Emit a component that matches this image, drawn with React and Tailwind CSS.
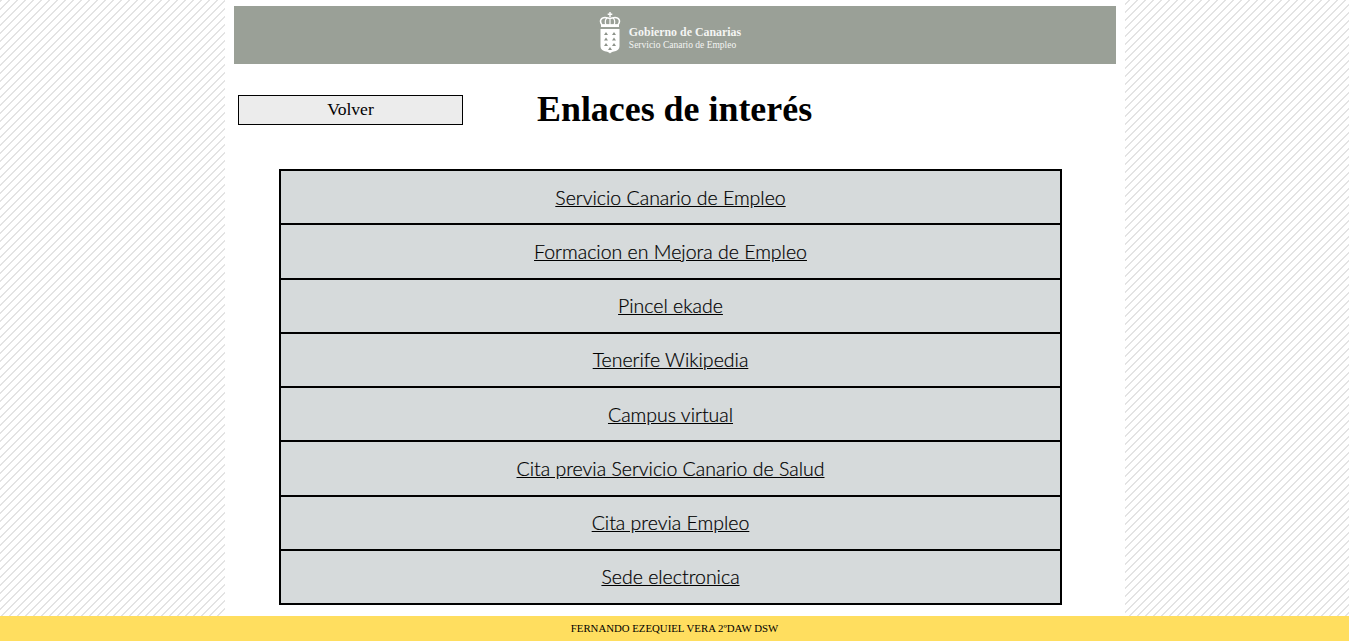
const links = [
  'Servicio Canario de Empleo',
  'Formacion en Mejora de Empleo',
  'Pincel ekade',
  'Tenerife Wikipedia',
  'Campus virtual',
  'Cita previa Servicio Canario de Salud',
  'Cita previa Empleo',
  'Sede electronica',
];

function Crest() {
  return (
    <svg width="22" height="42" viewBox="0 0 22 42" className="shrink-0">
      {/* cruz y corona */}
      <path d="M10.300 0h1.400v1.600h1.600V3h-1.600v2h-1.400V3H8.700V1.600h1.600z" fill="#fff" />
      <path d="M3 13C0 9 2 5.500 6 5.500c2 0 3.500 .8 5 .8s3-.8 5-.8c4 0 6 3.500 3 7.500z" fill="none" stroke="#fff" strokeWidth="1.600" />
      <path d="M7 13C5.500 10 6.500 7 8 6M15 13c1.500-3 .5-6-1-7M11 6.500V13" fill="none" stroke="#fff" strokeWidth="1.200" />
      <rect x="2" y="12.500" width="18" height="2.500" fill="#fff" />
      {/* escudo */}
      <path d="M1.500 17h19v17c0 4-3 5-5.500 5.500-1.800.3-3 1-4 2-1-1-2.200-1.700-4-2C4.500 39 1.500 38 1.500 34z" fill="#fff" />
      <path d="M7 20l2 3H5zM15 20l2 3h-4zM7 25.500l2 3H5zM15 25.500l2 3h-4zM7 31l2 3H5zM15 31l2 3h-4zM11 35l2 3H9z" fill="#8d938a" />
    </svg>
  );
}

export default function App() {
  return (
    <div className="min-h-[641px] font-['Liberation_Serif',serif] text-black bg-[linear-gradient(135deg,#e3e3e3_0%,#e3e3e3_18%,#fff_18%,#fff_50%,#e3e3e3_50%,#e3e3e3_68%,#fff_68%,#fff_100%)] bg-[length:8px_8px]">
      <div className="w-[900px] h-[616px] ml-[225px] bg-white px-[9px] pt-[6px]">
        {/* Banner */}
        <div className="h-[58px] bg-[#9aa097] flex items-center justify-center">
          <div className="flex items-center gap-[8px] -ml-[10px] -mt-[5px]">
            <Crest />
            <div className="text-[#f4f5f3] mt-[12px]">
              <div className="text-[11.900px] leading-[13px] font-bold">Gobierno de Canarias</div>
              <div className="text-[9.500px] leading-[12px]">Servicio Canario de Empleo</div>
            </div>
          </div>
        </div>

        {/* Cabecera */}
        <div className="flex items-center mt-[23px] h-[44px]">
          <button className="w-[225px] h-[30px] ml-[4px] mt-[1px] border border-black bg-[#ececec] text-[17.600px] leading-none">
            Volver
          </button>
          <h1 className="ml-[74px] mt-[2px] text-[35.900px] font-bold leading-none">Enlaces de interés</h1>
        </div>

        {/* Enlaces */}
        <div className="w-[783px] ml-[45px] mt-[38px] border-2 border-b-0 border-black bg-[#d6dadb]">
          {links.map((link) => (
            <div key={link} className="h-[54.250px] flex items-center justify-center border-b-2 border-black">
              <a href="#" className="underline text-[19.500px] font-['Lato',sans-serif] font-light text-black [-webkit-text-stroke:0.2px_black]">
                {link}
              </a>
            </div>
          ))}
        </div>
      </div>

      <div className="h-[25px] bg-[#ffde5f] flex items-center justify-center text-[10.800px]">
        FERNANDO EZEQUIEL VERA 2ºDAW DSW
      </div>
    </div>
  );
}
